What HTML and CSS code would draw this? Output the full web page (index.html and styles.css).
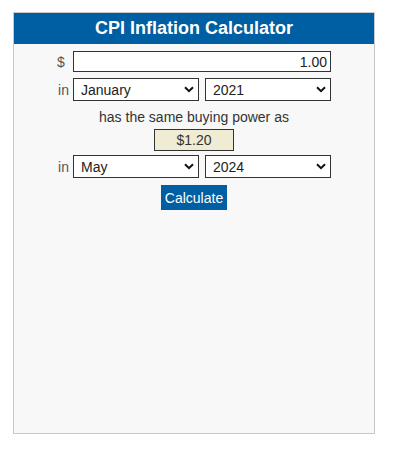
FILE: index.html
```html
<!DOCTYPE html>
<html>
<head>
<meta charset="utf-8">
<link rel="stylesheet" href="styles.css">
</head>
<body>
<div class="calc">
  <div class="calc-head">CPI Inflation Calculator</div>
  <div class="calc-body">
    <div class="row">
      <span class="lbl">$</span>
      <input class="amount" type="text" value="1.00">
    </div>
    <div class="row">
      <span class="lbl">in</span>
      <div class="pick">
        <select><option>January</option></select>
        <svg class="chev" width="10" height="7" viewBox="0 0 10 7"><path d="M1 1.2 L5 5.2 L9 1.2" fill="none" stroke="#111" stroke-width="2"/></svg>
      </div>
      <div class="pick">
        <select><option>2021</option></select>
        <svg class="chev" width="10" height="7" viewBox="0 0 10 7"><path d="M1 1.2 L5 5.2 L9 1.2" fill="none" stroke="#111" stroke-width="2"/></svg>
      </div>
    </div>
    <div class="same">has the same buying power as</div>
    <div class="result">$1.20</div>
    <div class="row">
      <span class="lbl">in</span>
      <div class="pick">
        <select><option>May</option></select>
        <svg class="chev" width="10" height="7" viewBox="0 0 10 7"><path d="M1 1.2 L5 5.2 L9 1.2" fill="none" stroke="#111" stroke-width="2"/></svg>
      </div>
      <div class="pick">
        <select><option>2024</option></select>
        <svg class="chev" width="10" height="7" viewBox="0 0 10 7"><path d="M1 1.2 L5 5.2 L9 1.2" fill="none" stroke="#111" stroke-width="2"/></svg>
      </div>
    </div>
    <button class="go">Calculate</button>
  </div>
</div>
</body>
</html>
```
FILE: styles.css
```css
html, body {
  margin: 0;
  padding: 0;
  background: #ffffff;
}
body {
  padding: 12px 0 0 13px;
  font-family: "Liberation Sans", Arial, sans-serif;
}
.calc {
  width: 360px;
  height: 420px;
  border: 1px solid #c8c8c8;
  background: #f8f8f8;
}
.calc-head {
  background: #005ea2;
  color: #ffffff;
  font-weight: bold;
  font-size: 18px;
  height: 31px;
  line-height: 31px;
  text-align: center;
}
.calc-body {
  display: flex;
  flex-direction: column;
  align-items: center;
  padding-top: 7px;
}
.row {
  display: flex;
  align-items: center;
  justify-content: flex-end;
  width: 274px;
  gap: 6px;
}
.lbl {
  color: #555555;
  font-size: 14px;
  margin-right: -2px;
}
.amount {
  box-sizing: border-box;
  width: 259px;
  height: 21px;
  border: 1px solid #333333;
  background: #ffffff;
  text-align: right;
  font-family: "Liberation Sans", Arial, sans-serif;
  font-size: 14px;
  color: #222222;
  padding: 0 3px;
  margin: 0 0 0 4px;
}
.row:nth-child(2) {
  margin-top: 6px;
}
.pick {
  position: relative;
  width: 126px;
  height: 23px;
}
.pick select {
  appearance: none;
  -webkit-appearance: none;
  box-sizing: border-box;
  width: 126px;
  height: 23px;
  border: 1px solid #333333;
  border-radius: 0;
  background: #ffffff;
  font-family: "Liberation Sans", Arial, sans-serif;
  font-size: 14px;
  color: #222222;
  padding: 0 0 0 7px;
  margin: 0;
}
.chev {
  position: absolute;
  right: 5px;
  top: 8px;
  pointer-events: none;
}
.same {
  margin-top: 8px;
  color: #333333;
  font-size: 14px;
  line-height: 16px;
}
.result {
  box-sizing: border-box;
  margin-top: 4px;
  width: 80px;
  height: 22px;
  line-height: 20px;
  border: 1px solid #333333;
  background: #f0ebd3;
  color: #333333;
  font-size: 14px;
  text-align: center;
  margin-bottom: 4px;
}
.go {
  margin-top: 7px;
  background: #005ea2;
  color: #ffffff;
  border: none;
  border-radius: 0;
  font-family: "Liberation Sans", Arial, sans-serif;
  font-size: 14px;
  width: 66px;
  height: 25px;
  padding: 0;
}
```
